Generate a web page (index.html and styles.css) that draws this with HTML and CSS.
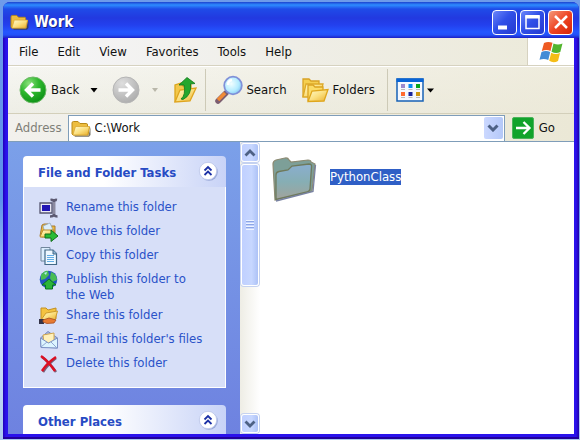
FILE: index.html
```
<!DOCTYPE html>
<html lang="en">
<head>
<meta charset="utf-8">
<title>Work</title>
<link rel="stylesheet" href="styles.css">
</head>
<body>
<svg class="defs" aria-hidden="true">
  <defs>
    <linearGradient id="yellow" x1="0" y1="0" x2="1" y2="1"><stop offset="0" stop-color="#fffbd0"/><stop offset=".5" stop-color="#fbe080"/><stop offset="1" stop-color="#e9ae2c"/></linearGradient>
    <radialGradient id="green" cx=".35" cy=".25" r=".85"><stop offset="0" stop-color="#8be07c"/><stop offset=".45" stop-color="#2eb82e"/><stop offset="1" stop-color="#078a12"/></radialGradient>
    <radialGradient id="gray" cx=".35" cy=".25" r=".85"><stop offset="0" stop-color="#dedede"/><stop offset="1" stop-color="#a9a9a9"/></radialGradient>
    <radialGradient id="lens" cx=".4" cy=".4" r=".7"><stop offset="0" stop-color="#f2feff"/><stop offset=".6" stop-color="#b4ecff"/><stop offset="1" stop-color="#78bdf0"/></radialGradient>
    <linearGradient id="teal" x1="0" y1="0" x2="0" y2="1"><stop offset="0" stop-color="#8aaed0"/><stop offset=".5" stop-color="#86aeb4"/><stop offset="1" stop-color="#a2a39b"/></linearGradient>
    <symbol id="folder" viewBox="0 0 20 17">
      <path d="M3 15.500H17.500L19.500 7V15L18 16.800H4Z" fill="#403a2a" opacity=".7"/>
      <path d="M1 14V3Q1 1.500 2.500 1.500H7L9 3.500H15.500Q16.500 3.500 16.500 5V7L18.500 7L17 15H2Z" fill="#edbd3e" stroke="#b98a18"/>
      <path d="M2 14.500L4.500 6.500H18.500L16.500 15H2Z" fill="url(#yellow)" stroke="#d7a32c" stroke-width=".7"/>
    </symbol>
    <symbol id="chevrons" viewBox="0 0 20 20">
      <circle cx="11" cy="11" r="8.800" fill="#6f83c0" opacity=".55"/>
      <circle cx="10" cy="10" r="8.700" fill="#fff" stroke="#b9c4e8" stroke-width=".8"/>
      <path d="M6.500 9.500L10 6L13.500 9.500M6.500 14L10 10.500L13.500 14" fill="none" stroke="#1c31a5" stroke-width="1.800"/>
    </symbol>
  </defs>
</svg>
<div class="window">
  <header class="titlebar">
    <svg class="title-icon" viewBox="0 0 20 17"><use href="#folder"/></svg>
    <h1>Work</h1>
    <div class="controls">
      <button class="control" aria-label="Minimize"><svg viewBox="0 0 22 22"><path d="M4 14.500H13V18.500H4Z" fill="#fff"/></svg></button>
      <button class="control" aria-label="Maximize"><svg viewBox="0 0 22 22"><path d="M4 5H17V17.500H4Z" fill="none" stroke="#fff" stroke-width="1.500"/><path d="M3.500 4H17.500V7.500H3.500Z" fill="#fff"/></svg></button>
      <button class="control close" aria-label="Close"><svg viewBox="0 0 22 22"><path d="M5 5L17 17M17 5L5 17" stroke="#fff" stroke-width="2.500"/></svg></button>
    </div>
  </header>

  <nav class="menubar">
    <div class="menus">
      <button>File</button><button>Edit</button><button>View</button><button>Favorites</button><button>Tools</button><button>Help</button>
    </div>
    <div class="brand">
      <svg viewBox="0 0 24 22">
        <path d="M5 2Q9 0 13.500 1.800L11.500 10Q7.500 8 2.800 10Z" fill="#ee5a22"/>
        <path d="M14.500 2.500Q19 4.500 23.500 2.500L21.300 11Q17 13 12.500 10.700Z" fill="#52b52e"/>
        <path d="M2.500 11Q7 9 11.200 11L9.300 19Q5 17 .5 18.800Z" fill="#438bd6"/>
        <path d="M12.200 11.700Q16.500 14 21 12L19 20Q14.500 22.500 10.200 19.800Z" fill="#f5bd17"/>
      </svg>
    </div>
  </nav>

  <div class="toolbar">
    <button class="tool back">
      <svg class="round" viewBox="0 0 28 28"><circle cx="14" cy="14" r="13" fill="url(#green)" stroke="#6bb864"/><path d="M21.500 14H8M14 7.500L7.500 14L14 20.500" fill="none" stroke="#fff" stroke-width="3.400"/></svg>
      Back
    </button>
    <button class="drop" aria-label="Back history"><svg viewBox="0 0 8 5"><path d="M.5 0H7.500L4 4.500Z" fill="#000"/></svg></button>
    <button class="tool forward" aria-label="Forward" disabled>
      <svg class="round" viewBox="0 0 28 28"><circle cx="14" cy="14" r="13" fill="url(#gray)" stroke="#b5b5b5"/><path d="M6.500 14H20M14 7.500L20.500 14L14 20.500" fill="none" stroke="#fff" stroke-width="3.400"/></svg>
    </button>
    <button class="drop" aria-label="Forward history" disabled><svg viewBox="0 0 8 5"><path d="M1 0H7L4 4Z" fill="#b9b7aa"/></svg></button>
    <button class="tool up" aria-label="Up">
      <svg class="up-icon" viewBox="0 0 24 28">
        <path d="M2 26V9L8 7L10 10L18 9V13" fill="#f3c84a" stroke="#dba51d" stroke-width="1.300"/>
        <path d="M2 26L7 14L23 12L17 25Z" fill="url(#yellow)" stroke="#dfa520" stroke-width="1.300"/>
        <path d="M8 23Q13 19 11 9H6L14 1.500L22 7.500L17.500 8Q19 19 10 23.500Z" fill="#24a72d" stroke="#0e7719" stroke-width=".8"/>
      </svg>
    </button>
    <span class="divider"></span>
    <button class="tool search">
      <svg class="search-icon" viewBox="0 0 30 30">
        <path d="M12 18L4 26" stroke="#7b5d70" stroke-width="5.500" stroke-linecap="round"/>
        <path d="M11 18L4 25" stroke="#f08a36" stroke-width="3.500"/>
        <circle cx="19" cy="10.500" r="8.800" fill="url(#lens)" stroke="#8090d8" stroke-width="1.800"/>
        <path d="M14 10Q14 5.500 18 5" fill="none" stroke="#fff" stroke-width="2.500"/>
      </svg>
      Search
    </button>
    <button class="tool folders">
      <svg class="round" viewBox="0 0 28 26">
        <path d="M2 20V2H8L10 4H18V10" fill="#f5cf50" stroke="#d8a324" stroke-width="1.300"/>
        <path d="M2 20L5 7H22L19 20Z" fill="url(#yellow)" stroke="#dda928" stroke-width="1.300"/>
        <path d="M7 24V8H12L14 10H22V14" fill="#fbdc67" stroke="#dba423" stroke-width="1.300"/>
        <path d="M7 24.500L11 14L27 12.500L23 24Z" fill="url(#yellow)" stroke="#dfa61c" stroke-width="1.300"/>
      </svg>
      Folders
    </button>
    <span class="divider"></span>
    <button class="tool views" aria-label="Views">
      <svg class="views-icon" viewBox="0 0 28 24">
        <path d="M1 1H27V23H1Z" fill="#f4f8ff" stroke="#1762b6" stroke-width="1.500"/><path d="M.5.500H27.500V4H.5Z" fill="#0864d6"/>
        <path d="M5 6H9V10H5Z" fill="#9b8ace"/><path d="M12.500 6H16.500V10H12.500Z" fill="#078af2"/><path d="M20 6H24V10H20Z" fill="#08a51c"/>
        <path d="M5 14H9V18H5Z" fill="#ff6a30"/><path d="M12.500 14H16.500V18H12.500Z" fill="#18249d"/><path d="M20 14H24V18H20Z" fill="#cf9710"/>
        <path d="M5 11.500H9M12.500 11.500H16.500M20 11.500H24M5 19.500H9M12.500 19.500H16.500M20 19.500H24" stroke="#bbb"/>
      </svg>
      <svg class="caret" viewBox="0 0 8 5"><path d="M0 0.500H7L3.500 4.500Z" fill="#000"/></svg>
    </button>
  </div>

  <form class="addressbar">
    <label for="address">Address</label>
    <div class="field">
      <svg viewBox="0 0 20 17"><use href="#folder"/></svg>
      <input id="address" type="text" value="C:\Work">
      <button type="button" class="expand" aria-label="Show addresses"><svg viewBox="0 0 12 8"><path d="M1.500 1.500L6 6L10.500 1.500" fill="none" stroke="#4d6185" stroke-width="3"/></svg></button>
    </div>
    <button type="button" class="go">
      <svg viewBox="0 0 22 22"><rect x=".5" y=".5" width="21" height="21" rx="1.500" fill="#12a32b" stroke="#4bb35b"/><path d="M4 11H17M11.500 5L17.500 11L11.500 17" fill="none" stroke="#fff" stroke-width="2.300"/></svg>
      Go
    </button>
  </form>

  <div class="content">
    <aside class="sidebar">
      <section class="panel">
        <div class="panel-head"><h2>File and Folder Tasks</h2><button aria-label="Collapse"><svg viewBox="0 0 20 20"><use href="#chevrons"/></svg></button></div>
        <ul>
          <li><svg viewBox="0 0 20 20"><path d="M1 5H13V15H1Z" fill="#e9e9f5" stroke="#55556f" stroke-width="1.300"/><path d="M3 7H11V13H3Z" fill="#2115b4"/><path d="M11.500 2Q14 1.500 15 3Q16 1.500 18 2M15 3V17M11 18.500Q14 18.500 15 17Q16 18.500 18.500 18.500" fill="none" stroke="#5b5971" stroke-width="2.600"/><path d="M15 4V16" stroke="#bdbdd0"/></svg><a href="#">Rename this folder</a></li>
          <li><svg viewBox="0 0 20 20"><path d="M3 15L1 14L3 3L5 2H9L10 4H16V14Z" fill="#eeb93e" stroke="#a67b32"/><path d="M4 4L11 1L14 8L6 11Z" fill="#dceefa" stroke="#8aa0b4" stroke-width=".7"/><path d="M1 15L4 8H15L13 15Z" fill="url(#yellow)" stroke="#bc8c2a"/><path d="M6 12H12V8L19 14L12 19.500V16H6Z" fill="#28bb35" stroke="#126f1b"/></svg><a href="#">Move this folder</a></li>
          <li><svg viewBox="0 0 20 20"><path d="M2 1.500H11V15H2Z" fill="#dceefe" stroke="#71879c"/><path d="M6 4H14L17.500 7.500V18.500H6Z" fill="#eef8ff" stroke="#426987" stroke-width="1.200"/><path d="M14 4V8H18" fill="#8db5d5" stroke="#426987"/><path d="M8 9.500H15M8 11.500H15M8 13.500H15M8 15.500H15" stroke="#62ade5"/></svg><a href="#">Copy this folder</a></li>
          <li class="two-line"><svg viewBox="0 0 20 20"><circle cx="9.500" cy="9.500" r="8.800" fill="#2454c2"/><path d="M2 5Q6 0 9 1L10 5L6 9L2 10ZM12 2Q18 4 18 10L13 12L11 8Z" fill="#48bd54"/><path d="M5 3L8 2L7 5Z" fill="#b3eef4"/><path d="M10 9L17 15H13.500V19H6.500V15H3Z" fill="#2bb439" stroke="#087322"/></svg><a href="#">Publish this folder to<br>the Web</a></li>
          <li><svg viewBox="0 0 20 20"><path d="M2 14V2H7L9 4L17 2V13Z" fill="#f4c340" stroke="#c39022"/><path d="M2 14L7 7L18.500 5L16 14Z" fill="url(#yellow)" stroke="#cc9b2e"/><path d="M0 13H5V18H0Z" fill="#343348"/><path d="M4 14L10 12L17 14L15 17L8 17.500L4 16Z" fill="#e77b32" stroke="#a64d20" stroke-width=".8"/></svg><a href="#">Share this folder</a></li>
          <li><svg viewBox="0 0 20 20"><path d="M1.500 8L9 1.500L18.500 8V18L2 17Z" fill="#a6b8e6" stroke="#788abb"/><path d="M4 5L15 3V13H5Z" fill="#fff1bb" stroke="#d0a64f"/><path d="M1.500 8L9.500 13L18.500 8V18L2 17.500Z" fill="#dcf5ff" stroke="#7b91c4"/><path d="M2 17L8 12M18 18L12 12" stroke="#91a8d2"/></svg><a href="#">E-mail this folder's files</a></li>
          <li><svg viewBox="0 0 20 20"><path d="M3 3Q10 8 17 18M17 4Q9 10 4 18" fill="none" stroke="#765e79" stroke-width="2.500"/><path d="M2 2Q9 7 16 17M17 3Q8 9 3 17" fill="none" stroke="#dc1024" stroke-width="2.500"/></svg><a href="#">Delete this folder</a></li>
        </ul>
      </section>
      <section class="panel">
        <div class="panel-head"><h2>Other Places</h2><button aria-label="Collapse"><svg viewBox="0 0 20 20"><use href="#chevrons"/></svg></button></div>
      </section>
    </aside>
    <div class="scrollbar">
      <button aria-label="Scroll up"><svg viewBox="0 0 12 8"><path d="M1.500 6.500L6 2L10.500 6.500" fill="none" stroke="#4d6185" stroke-width="2.800"/></svg></button>
      <div class="thumb"><span class="grip"></span></div>
      <button class="scroll-down" aria-label="Scroll down"><svg viewBox="0 0 12 8"><path d="M1.500 1.500L6 6L10.500 1.500" fill="none" stroke="#4d6185" stroke-width="2.800"/></svg></button>
    </div>
    <main>
      <a class="item" href="#">
        <svg viewBox="0 0 46 46">
          <path d="M3 44L1 8Q1 5 4 4L13 2Q16 1.500 17 4L19 6L36 4Q39 4 39 6L43 8L40 35Z" fill="#7d9f98" stroke="#8c8a72" stroke-width="1.200"/>
          <path d="M4 43.500L4 19Q4 16 7 15.500L16 14L20 10L37 8Q40 8 39.500 11L38 33Q38 35 35 36Z" fill="url(#teal)" stroke="#6f7a5c" stroke-width="1.300"/>
          <path d="M43.500 9L41 35.500L4 45" fill="none" stroke="#7882a2" stroke-width="1.300"/>
        </svg>
        <span>PythonClass</span>
      </a>
    </main>
  </div>
</div>
</body>
</html>
```
FILE: styles.css
```
* { box-sizing: border-box; }
body {
  margin: 0;
  height: 100vh;
  padding: 2px 1px 1px 3px;
  display: flex;
  background: linear-gradient(#6e9bea, #5b91ec 45%, #d8e6fa 75%, #a9c7ef);
  font: 13px/16px "DejaVu Sans Condensed", "DejaVu Sans", sans-serif;
  color: #111;
}
.defs { position: absolute; width: 0; height: 0; }
svg { display: block; flex: none; }
button {
  border: 0;
  padding: 0;
  background: none;
  color: inherit;
  font: inherit;
  display: flex;
  align-items: center;
}
h1, h2, ul { margin: 0; padding: 0; }
a { color: inherit; text-decoration: none; }

.window {
  flex: 1;
  min-width: 0;
  display: flex;
  flex-direction: column;
  padding: 0 5px 5px;
  border-radius: 7px 7px 0 0;
  background: linear-gradient(90deg, #2100b8, #2a12ec 3px, #2a12ec calc(100% - 3px), #2100a8);
  box-shadow: inset 0 -2px #22009c;
}
.titlebar {
  flex: none;
  height: 36px;
  margin: 0 -5px;
  padding: 4px 6px 0 7px;
  display: flex;
  align-items: center;
  border-radius: 7px 7px 0 0;
  background: linear-gradient(#1c42d0, #2d8cff 3px, #1f4be8 7px, #2239e0 16px, #2340ee 23px, #2456ff 30px, #2350f8 33px, #1d20c4);
}
.title-icon { width: 19px; height: 16px; }
h1 {
  margin-left: 5px;
  font: bold 15px/20px "DejaVu Sans Condensed", sans-serif;
  color: #fff;
  text-shadow: 1px 1px #14237e;
}
.controls { margin-left: auto; display: flex; gap: 3px; }
.control {
  width: 25px;
  height: 25px;
  justify-content: center;
  border: 1px solid #fff;
  border-radius: 4px;
  background: linear-gradient(135deg, #6b86fa, #3050e8 45%, #2439d0);
}
.control svg { width: 22px; height: 22px; }
.close { background: linear-gradient(135deg, #f49a7b, #ee4523 50%, #d5240a); }

.menubar {
  flex: none;
  height: 28px;
  display: flex;
  background: linear-gradient(90deg, #f6f6f9, #efeee7 50%, #ecead9);
  border-bottom: 1px solid #d6d2c0;
}
.menus { flex: 1; display: flex; gap: 19px; padding-left: 11px; }
.brand {
  width: 47px;
  display: flex;
  justify-content: center;
  align-items: center;
  background: #fff;
  border-left: 1px solid #d6d2c0;
}
.brand svg { width: 24px; height: 22px; }

.toolbar {
  flex: none;
  height: 48px;
  padding-left: 11px;
  display: flex;
  align-items: center;
  background: linear-gradient(90deg, transparent, rgba(235, 231, 211, .7)), linear-gradient(#f6f6f2, #eeeee6);
  border-top: 1px solid #fff;
  border-bottom: 1px solid #d3cfba;
}
.tool { gap: 4px; }
.round { width: 28px; height: 28px; }
.drop { margin-left: 11px; }
.drop svg { width: 8px; height: 5px; }
.forward { margin-left: 14px; }
.up { margin-left: 14px; }
.up-icon { width: 24px; height: 28px; }
.divider { width: 1px; height: 42px; margin: 0 8px; background: #cdcab7; }
.search { gap: 2px; }
.search-icon { width: 30px; height: 30px; }
.folders { margin-left: 14px; padding-right: 4px; }
.views { gap: 3px; }
.views-icon { width: 28px; height: 24px; }
.caret { width: 8px; height: 5px; }

.addressbar {
  flex: none;
  height: 28px;
  padding: 1px 19px 0 7px;
  display: flex;
  align-items: center;
  background: linear-gradient(90deg, #f2f1ed, #ebe8d6);
  border-bottom: 1px solid #7f9db9;
}
.addressbar label { color: #808078; }
.field {
  flex: 1;
  height: 27px;
  margin: 0 7px 0 6px;
  padding: 0 1px 0 2px;
  display: flex;
  align-items: center;
  background: #fff;
  border: 1px solid #7f9db9;
}
.field > svg { width: 20px; height: 17px; }
input {
  flex: 1;
  min-width: 0;
  margin-left: 4px;
  padding: 0;
  border: 0;
  outline: 0;
  background: none;
  color: #111;
  font: inherit;
}
.expand {
  width: 19px;
  height: 22px;
  justify-content: center;
  border-radius: 2px;
  background: linear-gradient(90deg, #cbd8ff, #b4c8f8);
}
.expand svg { width: 12px; height: 8px; }
.go { gap: 5px; }
.go svg { width: 22px; height: 22px; }

.content { flex: 1; min-height: 0; display: flex; background: #fff; }
.sidebar {
  flex: none;
  width: 232px;
  padding: 14px 14px 0 15px;
  display: flex;
  flex-direction: column;
  gap: 17px;
  overflow: hidden;
  background: linear-gradient(#7ba0e9, #6e82e0);
}
.panel { flex: none; }
.panel-head {
  height: 31px;
  padding: 0 8px 2px 15px;
  display: flex;
  align-items: center;
  justify-content: space-between;
  border-radius: 4px 4px 0 0;
  background: linear-gradient(90deg, #fff 40%, #c8d3f7);
}
h2 { padding-top: 4px; font: bold 13px/16px "DejaVu Sans Condensed", sans-serif; color: #274bc4; }
.panel-head svg { width: 20px; height: 20px; }
ul {
  list-style: none;
  padding: 12px 0 16px 15px;
  display: flex;
  flex-direction: column;
  gap: 8px;
  border: 1px solid #fff;
  border-top: 0;
  background: #d7dff8;
  color: #2a52c8;
}
li { display: flex; gap: 7px; }
li svg { width: 20px; height: 20px; margin: -1px 0 -3px; }
.two-line { margin-bottom: -4px; }

.scrollbar {
  flex: none;
  width: 20px;
  padding: 1px;
  display: flex;
  flex-direction: column;
  gap: 2px;
  background: linear-gradient(90deg, #eeede5, #fff);
}
.scrollbar button, .thumb {
  flex: none;
  justify-content: center;
  border: 1px solid #fff;
  border-radius: 3px;
  background: linear-gradient(90deg, #c0d0ff, #c7d7ff 60%, #adc2f6);
  box-shadow: 0 0 0 1px #c5d2f0;
}
.scrollbar button { height: 19px; }
.scrollbar svg { width: 12px; height: 8px; }
.scrollbar .thumb { height: 122px; display: flex; align-items: center; }
.grip {
  width: 8px;
  height: 10px;
  background: repeating-linear-gradient(#eef4ff 0 1px, #8ca6e6 1px 2px, #c3d3ff 2px 3px);
}
.scrollbar .scroll-down { margin-top: auto; }

main { flex: 1; min-width: 0; padding: 14px 12px; }
.item { display: flex; align-items: flex-start; gap: 12px; }
.item svg { width: 46px; height: 46px; }
.item span { margin-top: 13px; background: #2f5fc6; color: #fff; }
```
